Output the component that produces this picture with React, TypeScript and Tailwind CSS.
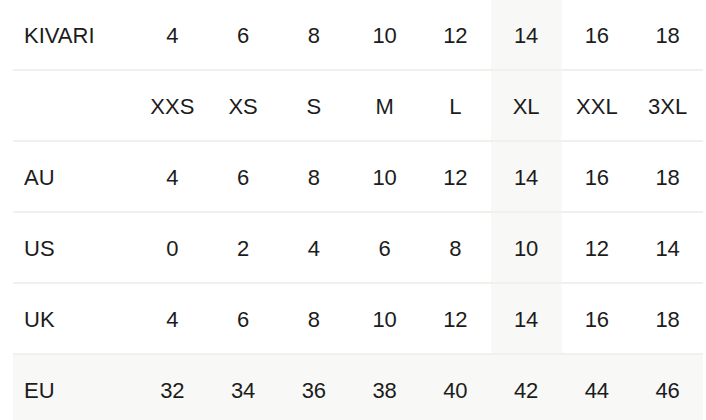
const sizes = ["4", "6", "8", "10", "12", "14", "16", "18"];

const rows: { label: string; values: string[]; shaded?: boolean }[] = [
  { label: "KIVARI", values: sizes },
  { label: "", values: ["XXS", "XS", "S", "M", "L", "XL", "XXL", "3XL"] },
  { label: "AU", values: sizes },
  { label: "US", values: ["0", "2", "4", "6", "8", "10", "12", "14"] },
  { label: "UK", values: sizes },
  { label: "EU", values: ["32", "34", "36", "38", "40", "42", "44", "46"], shaded: true },
];

// the column for the currently selected size
const activeCol = 5;

export default function App() {
  return (
    <div
      className="h-[420px] w-[706px] overflow-hidden bg-white text-[22px] text-[#1c1c1c]"
      style={{ fontFamily: '"Liberation Sans", Arial, sans-serif' }}
    >
      <table className="ml-[13px] w-[690px] table-fixed border-collapse">
        <colgroup>
          <col className="w-[124px]" />
          {sizes.map((s, i) => (
            <col key={i} />
          ))}
        </colgroup>
        <tbody>
          {rows.map((row, r) => (
            <tr
              key={r}
              className={`${r === rows.length - 1 ? "" : "border-b-2 border-[#f1f0ec]"} ${
                row.shaded ? "bg-[#f8f8f6]" : ""
              } ${r === 0 ? "h-[70px]" : "h-[71px]"}`}
            >
              <td className="pl-[11px] pt-[1px] text-left font-normal">{row.label}</td>
              {row.values.map((v, i) => (
                <td
                  key={i}
                  className={`pt-[1px] text-center ${i === activeCol ? "bg-[#f8f8f6]" : ""}`}
                >
                  {v}
                </td>
              ))}
            </tr>
          ))}
        </tbody>
      </table>
    </div>
  );
}
